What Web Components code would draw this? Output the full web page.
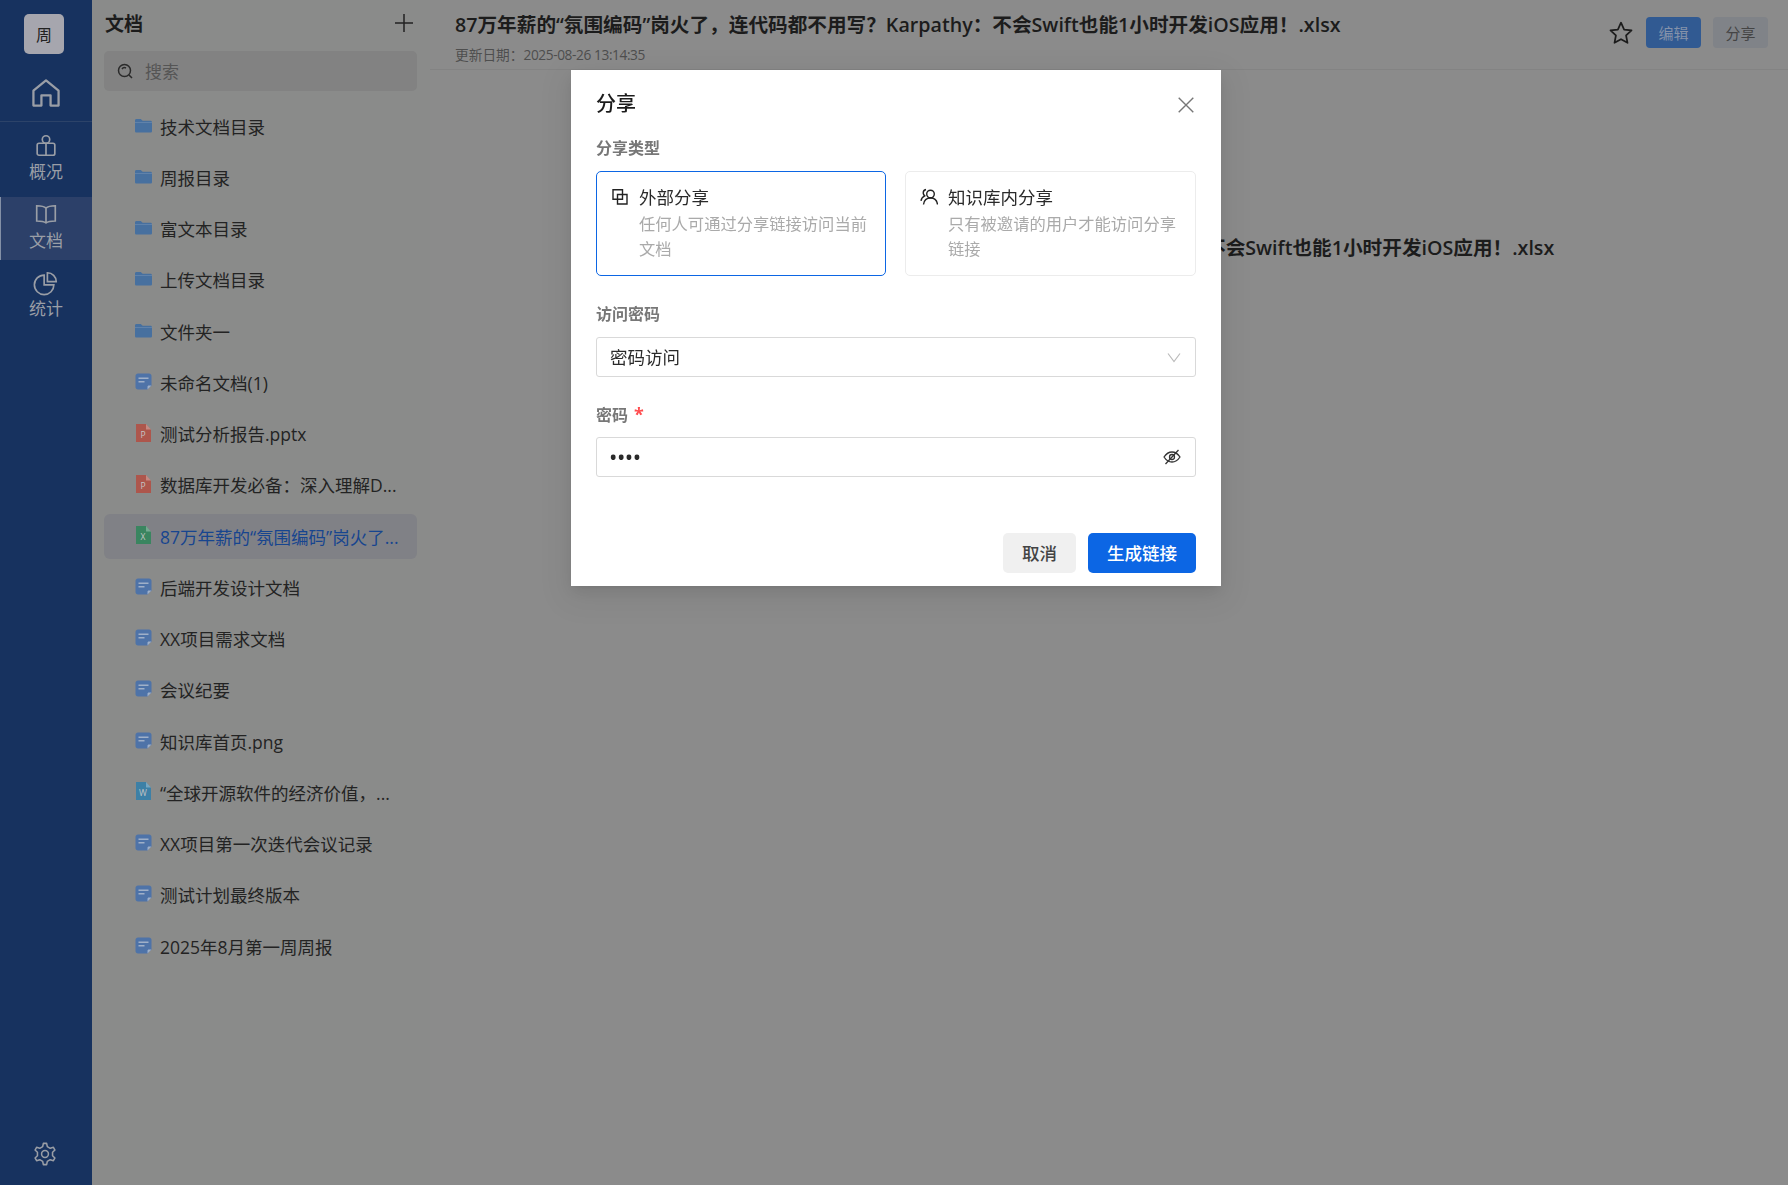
<!DOCTYPE html>
<html lang="zh-CN">
<head>
<meta charset="utf-8">
<title>文档</title>
<style>
  html, body { margin: 0; height: 100%; overflow: hidden; }
  body {
    font-family: "Open Sans", "Noto Sans CJK SC", sans-serif;
    background: #8b8b8b;
    color: #222;
  }
  .page { display: flex; height: 1185px; }
</style>
</head>
<body>
<div class="page">
  <app-rail></app-rail>
  <doc-sidebar></doc-sidebar>
  <doc-main></doc-main>
</div>
<share-dialog></share-dialog>

<script>
// Colours are the dimmed ones seen behind the modal mask, so no mask layer is painted

// six-toothed cog outline
function cogPath() {
  const pts = [];
  for (let i = 0; i < 6; i++) {
    const a = (Math.PI / 3) * i - Math.PI / 2;
    [[-0.3, 9], [-0.15, 12.5], [0.15, 12.5], [0.3, 9]].forEach(([da, r]) => {
      pts.push(`${(14 + r * Math.cos(a + da)).toFixed(1)} ${(14 + r * Math.sin(a + da)).toFixed(1)}`);
    });
  }
  return `M${pts.join('L')}Z`;
}

const icons = {
  home: `<path d="M3 12 14 3l11 9v13h-7v-9h-8v9H3z" stroke-linejoin="round"/>`,
  gift: `<rect x="4.500" y="11" width="19" height="13" rx="2"/><path d="M14 11v13"/><circle cx="14" cy="7" r="4"/>`,
  book: `<path d="M14 6.500C12 4.500 9 4 4 4v16.500c4.500 0 8 .5 10 2 2-1.500 5.500-2 10-2V4C19 4 16 4.500 14 6.500zM14 6.500v16" />`,
  pie: `<path d="M12 5.500a10.500 10.500 0 1 0 10.500 10.500H12z"/><path d="M15.500 3v9.500H25A9.500 9.500 0 0 0 15.500 3z"/>`,
  gear: `<path d="${cogPath()}" stroke-linejoin="round"/><circle cx="14" cy="14" r="4"/>`
};

class AppRail extends HTMLElement {
  constructor() {
    super();
    this.attachShadow({ mode: 'open' });
  }

  connectedCallback() {
    this.shadowRoot.innerHTML = `
      <style>
        :host {
          display: flex;
          flex-direction: column;
          flex: 0 0 92px;
          height: 1185px;
          background: #17325f;
          color: #9a9ea6;
        }
        .avatar {
          width: 40px;
          height: 40px;
          margin: 14px 0 0 24px;
          border-radius: 5px;
          background: #a6a6ae;
          color: #222;
          font-size: 16px;
          display: flex;
          align-items: center;
          justify-content: center;
        }
        .home {
          height: 68px;
          border-bottom: 1px solid #2c4369;
          display: flex;
          justify-content: center;
          padding-top: 23px;
          box-sizing: border-box;
        }
        .home svg { width: 32px; height: 32px; margin-left: -1px; stroke-width: 2; }
        svg { fill: none; stroke: currentColor; stroke-width: 1.800; display: block; }
        .gear { margin-top: auto; height: 43px; padding-left: 33px; box-sizing: border-box; }
        .gear svg { width: 24px; height: 24px; }
      </style>
      <div class="avatar">周</div>
      <div class="home"><svg viewBox="0 0 28 28">${icons.home}</svg></div>
      <rail-item label="概况" icon="gift" style="margin-top:6px"></rail-item>
      <rail-item label="文档" icon="book" active></rail-item>
      <rail-item label="统计" icon="pie"></rail-item>
      <div class="gear"><svg viewBox="0 0 28 28">${icons.gear}</svg></div>
    `;
  }
}
customElements.define('app-rail', AppRail);

class RailItem extends HTMLElement {
  constructor() {
    super();
    this.attachShadow({ mode: 'open' });
  }

  connectedCallback() {
    const label = this.getAttribute('label');
    const icon = this.getAttribute('icon');
    this.shadowRoot.innerHTML = `
      <style>
        :host {
          display: flex;
          flex-direction: column;
          align-items: center;
          height: 63px;
          padding-top: 5px;
          box-sizing: border-box;
          color: #9a9ea6;
          font-size: 17px;
          line-height: 24px;
          margin-bottom: 6px;
        }
        :host([active]) {
          background: #2c4069;
          box-shadow: inset 1px 0 0 #8490a6;
          margin-bottom: 5px;
        }
        svg { width: 26px; height: 26px; margin-bottom: 1px; fill: none; stroke: currentColor; stroke-width: 1.800; display: block; flex: none; }
      </style>
      <svg viewBox="0 0 28 28">${icons[icon]}</svg>
      <span>${label}</span>
    `;
  }
}
customElements.define('rail-item', RailItem);

const docs = [
  { type: 'folder', title: '技术文档目录' },
  { type: 'folder', title: '周报目录' },
  { type: 'folder', title: '富文本目录' },
  { type: 'folder', title: '上传文档目录' },
  { type: 'folder', title: '文件夹一' },
  { type: 'doc', title: '未命名文档(1)' },
  { type: 'ppt', title: '测试分析报告.pptx' },
  { type: 'ppt', title: '数据库开发必备：深入理解D...' },
  { type: 'xls', title: '87万年薪的“氛围编码”岗火了...', active: true },
  { type: 'doc', title: '后端开发设计文档' },
  { type: 'doc', title: 'XX项目需求文档' },
  { type: 'doc', title: '会议纪要' },
  { type: 'doc', title: '知识库首页.png' },
  { type: 'word', title: '“全球开源软件的经济价值，...' },
  { type: 'doc', title: 'XX项目第一次迭代会议记录' },
  { type: 'doc', title: '测试计划最终版本' },
  { type: 'doc', title: '2025年8月第一周周报' }
];

class DocSidebar extends HTMLElement {
  constructor() {
    super();
    this.attachShadow({ mode: 'open' });
  }

  connectedCallback() {
    this.shadowRoot.innerHTML = `
      <style>
        :host {
          display: block;
          flex: 0 0 338px;
          height: 1185px;
          box-sizing: border-box;
          padding: 0 13px 0 12px;
          background: #8a8b8a;
        }
        .top {
          height: 51px;
          display: flex;
          justify-content: space-between;
          align-items: flex-start;
        }
        h2 {
          margin: 10px 0 0 1px;
          font-size: 19px;
          line-height: 28px;
          font-weight: 700;
          color: #1c1c1c;
        }
        .plus { width: 20px; height: 20px; margin: 13px 3px 0 0; stroke: #222; stroke-width: 1.500; fill: none; }
        .search {
          height: 40px;
          border-radius: 5px;
          background: #828282;
          display: flex;
          align-items: center;
          padding-left: 13px;
          gap: 12px;
          color: #555;
          font-size: 17px;
          margin-bottom: 12.600px;
        }
        .search span { margin-top: -2px; }
        .search svg { width: 16px; height: 16px; fill: none; stroke: #2a2a2a; stroke-width: 1.500; }
      </style>
      <div class="top">
        <h2>文档</h2>
        <svg class="plus" viewBox="0 0 20 20"><path d="M10 1v18M1 10h18"/></svg>
      </div>
      <div class="search">
        <svg viewBox="0 0 16 16"><circle cx="7.500" cy="7.500" r="6"/><path d="M12 12l3 3M5 6a3 3 0 0 1 4-1"/></svg>
        <span>搜索</span>
      </div>
      <div id="list"></div>
    `;
    const list = this.shadowRoot.getElementById('list');
    docs.forEach(item => {
      const el = document.createElement('doc-row');
      el.setAttribute('type', item.type);
      el.textContent = item.title;
      if (item.active) el.setAttribute('active', '');
      list.appendChild(el);
    });
  }
}
customElements.define('doc-sidebar', DocSidebar);

function rowIcon(type) {
  if (type === 'folder') {
    return `<svg class="box" viewBox="0 0 18 18"><path fill="#47709f" d="M0 3.500C0 2.700.6 2 1.500 2h4.600l2 2H16.500c.8 0 1.500.7 1.500 1.500V15c0 .8-.7 1.500-1.500 1.500h-15C.7 16.500 0 15.800 0 15z"/><path fill="#6a88ae" d="M0 5.300h18v.8H0z"/></svg>`;
  }
  if (type === 'doc') {
    return `<svg class="box" viewBox="0 0 17 17"><path fill="#4e73a8" d="M3 .5h11c1.400 0 2.500 1.100 2.500 2.500v9.500l-4 4H3C1.600 16.500.5 15.400.5 14V3C.5 1.600 1.600.5 3 .5z"/><path fill="#9fb0c8" d="M3.500 4.500h10V6h-10zM3.500 8h6v1.500h-6zM12.500 16.500l4-4h-2.700c-.7 0-1.300.6-1.300 1.300z"/></svg>`;
  }
  const fill = { ppt: '#ad564c', xls: '#3a8560', word: '#3d80a6' }[type];
  const letter = { ppt: 'P', xls: 'X', word: 'W' }[type];
  return `<svg class="file" viewBox="0 0 15 18"><path fill="${fill}" d="M0 0h10l5 5.500V18H0z"/><path fill="#fff" fill-opacity=".3" d="M10 0l5 5.500h-5z"/><text x="7" y="14" text-anchor="middle" font-size="8.500" fill="#c4c4c4" font-family="Open Sans">${letter}</text></svg>`;
}

class DocRow extends HTMLElement {
  constructor() {
    super();
    this.attachShadow({ mode: 'open' });
  }

  connectedCallback() {
    this.shadowRoot.innerHTML = `
      <style>
        :host {
          display: flex;
          align-items: center;
          gap: 8px;
          height: 45px;
          margin-bottom: 6.250px;
          padding-left: 31px;
          border-radius: 6px;
          font-size: 17.500px;
          color: #232323;
          white-space: nowrap;
        }
        :host([active]) {
          background: #808186;
          color: #17458f;
        }
        svg { display: block; flex: none; }
        .box { width: 17px; height: 17px; margin-top: -2px; }
        .file { width: 15px; height: 18px; margin: -2px 1px 0 1px; }
      </style>
      ${rowIcon(this.getAttribute('type'))}
      <slot></slot>
    `;
  }
}
customElements.define('doc-row', DocRow);

const fileName = '87万年薪的“氛围编码”岗火了，连代码都不用写？Karpathy：不会Swift也能1小时开发iOS应用！.xlsx';

class DocMain extends HTMLElement {
  constructor() {
    super();
    this.attachShadow({ mode: 'open' });
  }

  connectedCallback() {
    this.shadowRoot.innerHTML = `
      <style>
        :host { display: block; flex: 1; min-width: 0; background: #8b8b8b; }
        header {
          height: 70px;
          box-sizing: border-box;
          border-bottom: 1px solid #838383;
          display: flex;
          justify-content: space-between;
          padding: 0 20px 0 25px;
        }
        h1 {
          margin: 11px 0 0;
          font-size: 19.650px;
          line-height: 28px;
          font-weight: 600;
          color: #1c1c1c;
          white-space: nowrap;
        }
        .date { font-size: 13.700px; line-height: 20px; margin-top: 6px; color: #4e4e4e; }
        .date span { letter-spacing: -.4px; }
        .tools { display: flex; align-items: center; gap: 12px; padding-bottom: 4px; }
        .star { width: 26px; height: 26px; fill: none; stroke: #1c1c1c; stroke-width: 1.600; margin: 1px 0 0 0; }
        .btn {
          width: 55px;
          height: 31px;
          border-radius: 4px;
          display: flex;
          align-items: center;
          justify-content: center;
          font-size: 15px;
        }
        .edit { background: #315a92; color: #8492aa; }
        .share { background: #808388; color: #444; }
        .body {
          text-align: center;
          font-size: 19.650px;
          line-height: 28px;
          font-weight: 600;
          color: #1c1c1c;
          padding: 164px 0 0 5px;
          white-space: nowrap;
        }
      </style>
      <header>
        <div>
          <h1>${fileName}</h1>
          <div class="date">更新日期：<span>2025-08-26 13:14:35</span></div>
        </div>
        <div class="tools">
          <svg class="star" viewBox="0 0 24 24"><path d="M12 2.500l2.900 6.300 6.800.8-5 4.700 1.300 6.800-6-3.400-6 3.400 1.300-6.800-5-4.700 6.800-.8z" stroke-linejoin="round"/></svg>
          <div class="btn edit">编辑</div>
          <div class="btn share">分享</div>
        </div>
      </header>
      <div class="body">${fileName}</div>
    `;
  }
}
customElements.define('doc-main', DocMain);

class ShareOption extends HTMLElement {
  constructor() {
    super();
    this.attachShadow({ mode: 'open' });
  }

  connectedCallback() {
    this.shadowRoot.innerHTML = `
      <style>
        :host {
          display: flex;
          gap: 10px;
          flex: 0 0 291px;
          height: 105px;
          box-sizing: border-box;
          border: 1px solid #ececec;
          border-radius: 5px;
          padding: 13px 14px 0 14px;
        }
        :host([selected]) { flex-basis: 290px; border-color: #0c66e4; }
        .icon { flex: 0 0 18px; height: 18px; margin-top: 3px; }
        ::slotted(svg) { display: block; }
        .title { font-size: 17.500px; line-height: 25px; color: #2a2a2a; margin-bottom: 2px; }
        .desc { font-size: 16.300px; line-height: 25px; color: #aaa; }
      </style>
      <div class="icon"><slot name="icon"></slot></div>
      <div>
        <div class="title">${this.getAttribute('label')}</div>
        <div class="desc"><slot></slot></div>
      </div>
    `;
  }
}
customElements.define('share-option', ShareOption);

class FormField extends HTMLElement {
  constructor() {
    super();
    this.attachShadow({ mode: 'open' });
  }

  connectedCallback() {
    const required = this.hasAttribute('required');
    this.shadowRoot.innerHTML = `
      <style>
        :host { display: block; margin-top: 25px; }
        .label {
          font-size: 16px;
          line-height: 24px;
          font-weight: 700;
          color: #777;
          margin-bottom: var(--label-gap, 11px);
        }
        .req { color: #ff4d4f; margin-left: 6px; font-weight: 700; font-size: 18px; }
        .box {
          height: 40px;
          box-sizing: border-box;
          border: 1px solid #d9d9d9;
          border-radius: 3px;
          padding: 0 14px 0 13px;
          display: flex;
          align-items: center;
          justify-content: space-between;
          font-size: 17.500px;
          color: #2a2a2a;
        }
      </style>
      <div class="label">${this.getAttribute('label')}${required ? '<span class="req">*</span>' : ''}</div>
      <div class="box"><slot></slot><slot name="end"></slot></div>
    `;
  }
}
customElements.define('form-field', FormField);

class ShareDialog extends HTMLElement {
  constructor() {
    super();
    this.attachShadow({ mode: 'open' });
  }

  connectedCallback() {
    this.shadowRoot.innerHTML = `
      <style>
        :host {
          position: fixed;
          left: 571px;
          top: 70px;
          width: 650px;
          height: 516px;
          box-sizing: border-box;
          padding: 0 25px;
          background: #fff;
          display: block;
          box-shadow: 0 6px 16px rgba(0,0,0,.08), 0 3px 6px -4px rgba(0,0,0,.12), 0 9px 28px 8px rgba(0,0,0,.05);
          color: #2a2a2a;
        }
        .head {
          height: 66px;
          display: flex;
          justify-content: space-between;
          align-items: center;
        }
        h3 { margin: 2px 0 0; font-size: 20px; line-height: 28px; font-weight: 500; color: #1c1c1c; }
        .close { width: 16px; height: 16px; stroke: #777; stroke-width: 1.400; fill: none; margin: 4px 2px 0 0; }
        .label { font-size: 16px; line-height: 24px; font-weight: 700; color: #777; margin: 0 0 11px; }
        .options { display: flex; justify-content: space-between; width: 600px; }
        form-field.first { margin-top: 26px; }
        .mode { margin-top: -2px; }
        .dots { letter-spacing: 1.500px; font-size: 17px; font-weight: 700; }
        .foot {
          display: flex;
          justify-content: flex-end;
          gap: 12px;
          margin-top: 56px;
        }
        .btn {
          height: 40px;
          box-sizing: border-box;
          padding-bottom: 2px;
          border-radius: 5px;
          display: flex;
          align-items: center;
          justify-content: center;
          font-size: 17.500px;
          font-weight: 500;
        }
        .cancel { width: 73px; background: #f0f0f0; color: #444; }
        .ok { width: 108px; background: #0c66e4; color: #fff; }
      </style>
      <div class="head">
        <h3>分享</h3>
        <svg class="close" viewBox="0 0 16 16"><path d="M.7.700l14.600 14.600M15.300.700.700 15.300"/></svg>
      </div>
      <div class="label">分享类型</div>
      <div class="options">
        <share-option label="外部分享" selected>
          <svg slot="icon" width="18" height="18" viewBox="0 0 18 18" fill="none" stroke="#222" stroke-width="1.400"><path d="M2 1.700h9.500v9.500H2zM6.500 6.500H16V16H6.500z"/></svg>
          任何人可通过分享链接访问当前文档
        </share-option>
        <share-option label="知识库内分享">
          <svg slot="icon" width="18" height="18" viewBox="0 0 18 18" fill="none" stroke="#222" stroke-width="1.400"><circle cx="10.500" cy="6" r="3.800"/><path d="M3.500 16.500c.5-4 3-6.500 7-6.500s6.500 2.500 7 6.500M6 1.500C4 2 3 3.500 3.300 5.500c.2 1 .7 1.800 1.400 2.400-2 1-3.400 2.800-3.700 5"/></svg>
          只有被邀请的用户才能访问分享链接
        </share-option>
      </div>
      <form-field class="first" label="访问密码">
        <span class="mode">密码访问</span>
        <svg slot="end" width="14" height="14" viewBox="0 0 14 14" fill="none" stroke="#bbb" stroke-width="1.200"><path d="M1 3.500l6 8 6-8"/></svg>
      </form-field>
      <form-field label="密码" required style="--label-gap: 10px">
        <span class="dots">••••</span>
        <svg slot="end" width="18" height="18" viewBox="0 0 18 18" fill="none" stroke="#333" stroke-width="1.300"><path d="M1 9c2-3 4.800-5 8-5s6 2 8 5c-2 3-4.800 5-8 5s-6-2-8-5z"/><circle cx="9" cy="9" r="2.500"/><path d="M15.500 2 2.500 16"/></svg>
      </form-field>
      <div class="foot">
        <div class="btn cancel">取消</div>
        <div class="btn ok">生成链接</div>
      </div>
    `;
  }
}
customElements.define('share-dialog', ShareDialog);
</script>
</body>
</html>
